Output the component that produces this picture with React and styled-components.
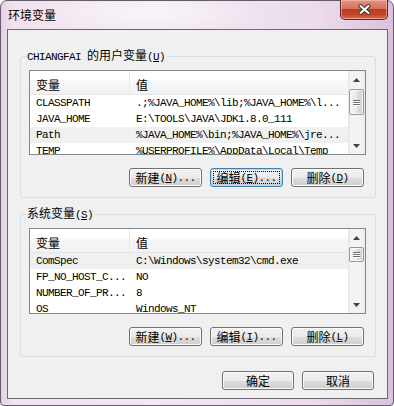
import React from "react";
import styled, { createGlobalStyle } from "styled-components";

const userVars = [
  ["CLASSPATH", ".;%JAVA_HOME%\\lib;%JAVA_HOME%\\l..."],
  ["JAVA_HOME", "E:\\TOOLS\\JAVA\\JDK1.8.0_111"],
  ["Path", "%JAVA_HOME%\\bin;%JAVA_HOME%\\jre..."],
  ["TEMP", "%USERPROFILE%\\AppData\\Local\\Temp"],
];

const systemVars = [
  ["ComSpec", "C:\\Windows\\system32\\cmd.exe"],
  ["FP_NO_HOST_C...", "NO"],
  ["NUMBER_OF_PR...", "8"],
  ["OS", "Windows_NT"],
];

const Arrow = ({ down }) => (
  <svg width="7" height="4" viewBox="0 0 7 4">
    <path d={down ? "M0 0 L7 0 L3.5 4 Z" : "M0 4 L7 4 L3.5 0 Z"} fill="#3f4247" />
  </svg>
);

const VarList = ({ rows, selected, height, thumb }) => (
  <List $height={height}>
    <Table>
      <Header>
        <HeaderCell $width={100} $sep>变量</HeaderCell>
        <HeaderCell>值</HeaderCell>
      </Header>
      {rows.map(([name, value], i) => (
        <Row key={name} $selected={i === selected}>
          <Cell $width={100}>{name}</Cell>
          <Cell>{value}</Cell>
        </Row>
      ))}
    </Table>
    <ScrollBar>
      <ArrowBox>
        <Arrow />
      </ArrowBox>
      <Track>
        <Thumb $height={thumb}>
          <Grip />
          <Grip />
          <Grip />
        </Thumb>
      </Track>
      <ArrowBox>
        <Arrow down />
      </ArrowBox>
    </ScrollBar>
  </List>
);

const App = () => {
  return (
    <Window>
      <GlobalStyle />
      <TitleBar>
        <Title>环境变量</Title>
        <CloseButton>
          <svg width="13" height="11" viewBox="0 0 13 11">
            <path d="M2.5 2 L10.5 9 M10.5 2 L2.5 9" stroke="#3b2a28" strokeWidth="4" strokeLinecap="round" />
            <path d="M2.5 2 L10.5 9 M10.5 2 L2.5 9" stroke="#fff" strokeWidth="2.2" strokeLinecap="round" />
          </svg>
        </CloseButton>
      </TitleBar>
      <Client>
        <Group>
          <Legend>
            <Latin>CHIANGFAI </Latin>的用户变量<Latin>(<u>U</u>)</Latin>
          </Legend>
          <VarList rows={userVars} selected={2} height={85} thumb={26} />
          <ButtonRow>
            <Button>
              新建<Latin>(<u>N</u>)...</Latin>
            </Button>
            <Button $focused>
              编辑<Latin>(<u>E</u>)...</Latin>
            </Button>
            <Button>
              删除<Latin>(<u>D</u>)</Latin>
            </Button>
          </ButtonRow>
        </Group>
        <Group $second>
          <Legend>
            系统变量<Latin>(<u>S</u>)</Latin>
          </Legend>
          <VarList rows={systemVars} selected={0} height={86} thumb={15} />
          <ButtonRow>
            <Button>
              新建<Latin>(<u>W</u>)...</Latin>
            </Button>
            <Button>
              编辑<Latin>(<u>I</u>)...</Latin>
            </Button>
            <Button>
              删除<Latin>(<u>L</u>)</Latin>
            </Button>
          </ButtonRow>
        </Group>
        <Footer>
          <Button $width={72}>确定</Button>
          <Button $width={72}>取消</Button>
        </Footer>
      </Client>
    </Window>
  );
};

const GlobalStyle = createGlobalStyle`
  html, body {
    margin: 0;
    padding: 0;
    background: #fff;
  }
  body {
    font-family: "Noto Sans CJK SC", sans-serif;
    font-size: 12px;
    color: #000;
  }
`;

const Window = styled.div`
  box-sizing: border-box;
  width: 394px;
  height: 406px;
  border: 1px solid #625c66;
  border-radius: 7px 7px 4px 4px;
  padding: 0 5px 6px 6px;
  display: flex;
  flex-direction: column;
  background:
    radial-gradient(ellipse 120px 20px at 150px 12px, rgba(255, 255, 255, 0.55), rgba(255, 255, 255, 0)),
    linear-gradient(90deg, #e6cfe6 0%, #f1e3ef 3%, #f3e8f2 40%, #ecdcec 80%, #dcc0dc 100%);
`;

const TitleBar = styled.div`
  height: 28px;
  display: flex;
  justify-content: space-between;
  align-items: flex-start;
`;

const Title = styled.div`
  margin: 6px 0 0 1px;
  line-height: 16px;
  font-size: 12px;
`;

const CloseButton = styled.div`
  box-sizing: border-box;
  width: 48px;
  height: 20px;
  margin-top: -1px;
  border: 1px solid #5e2a24;
  border-top: none;
  border-radius: 0 0 5px 5px;
  display: flex;
  align-items: center;
  justify-content: center;
  background: linear-gradient(180deg, #e2927f 0%, #d6735d 45%, #bd3a20 50%, #c8472b 80%, #da7258 100%);
  box-shadow: inset 0 0 0 1px rgba(255, 210, 200, 0.5);
`;

const Client = styled.div`
  flex: 1;
  border: 1px solid #6b6770;
  background: #f0f0f0;
  padding-top: 18px;
  display: flex;
  flex-direction: column;
`;

const Group = styled.fieldset`
  margin: ${(p) => (p.$second ? "8px" : "0")} 11px 0 12px;
  padding: 6px 9px 10px 8px;
  border: 1px solid #d5dfe5;
  border-radius: 3px;
  min-width: 0;
`;

const Legend = styled.legend`
  padding: 0 2px 0 1px;
  margin-left: -3px;
  line-height: 14px;
  font-size: 12px;
`;

const Latin = styled.span`
  font-family: "Liberation Mono", monospace;
  font-size: 11px;
  letter-spacing: -0.6px;
`;

const List = styled.div`
  box-sizing: border-box;
  height: ${(p) => p.$height}px;
  border: 1px solid #828790;
  background: #fff;
  display: flex;
  overflow: hidden;
`;

const Table = styled.div`
  flex: 1;
  min-width: 0;
  overflow: hidden;
`;

const Header = styled.div`
  box-sizing: border-box;
  height: 24px;
  display: flex;
  border-bottom: 1px solid #e5e5e5;
  background: linear-gradient(180deg, #ffffff 0%, #ffffff 38%, #f6f7f9 42%, #f1f2f4 100%);
`;

const HeaderCell = styled.div`
  box-sizing: border-box;
  width: ${(p) => (p.$width ? `${p.$width}px` : "auto")};
  flex: ${(p) => (p.$width ? "none" : "1")};
  padding: 3px 0 0 6px;
  display: flex;
  align-items: center;
  font-size: 12px;
  border-right: ${(p) => (p.$sep ? "1px solid #e3e8ee" : "none")};
`;

const Row = styled.div`
  height: 16px;
  display: flex;
  background: ${(p) => (p.$selected ? "#f0f0f0" : "transparent")};
`;

const Cell = styled.div`
  box-sizing: border-box;
  width: ${(p) => (p.$width ? `${p.$width}px` : "auto")};
  flex: ${(p) => (p.$width ? "none" : "1")};
  padding-left: 6px;
  font-family: "Liberation Mono", monospace;
  font-size: 11px;
  letter-spacing: -0.6px;
  line-height: 16px;
  white-space: nowrap;
  overflow: hidden;
`;

const ScrollBar = styled.div`
  width: 17px;
  display: flex;
  flex-direction: column;
  background: linear-gradient(90deg, #e4e4e4 0%, #f3f3f3 15%, #f3f3f3 85%, #e9e9e9 100%);
`;

const ArrowBox = styled.div`
  height: 17px;
  display: flex;
  align-items: center;
  justify-content: center;
`;

const Track = styled.div`
  flex: 1;
`;

const Thumb = styled.div`
  box-sizing: border-box;
  height: ${(p) => p.$height}px;
  margin: 1px 1px 0 1px;
  border: 1px solid #979797;
  border-radius: 2px;
  background: linear-gradient(90deg, #f3f3f3 0%, #ebebeb 50%, #dcdcdc 51%, #d4d4d4 100%);
  box-shadow: inset 0 0 0 1px rgba(255, 255, 255, 0.7);
  display: flex;
  flex-direction: column;
  align-items: center;
  justify-content: center;
  gap: 1px;
`;

const Grip = styled.div`
  width: 7px;
  height: 1px;
  background: #6d6d6d;
  box-shadow: 0 1px 0 #fff;
`;

const ButtonRow = styled.div`
  display: flex;
  justify-content: flex-end;
  gap: 8px;
  margin-top: 13px;
  padding-right: 2px;
`;

const Button = styled.div`
  box-sizing: border-box;
  width: ${(p) => p.$width || 73}px;
  height: 19px;
  border: 1px solid ${(p) => (p.$focused ? "#3c7fb1" : "#707070")};
  border-radius: 3px;
  display: flex;
  align-items: center;
  justify-content: center;
  font-size: 12px;
  line-height: 14px;
  background: linear-gradient(180deg, #f2f2f2 0%, #ebebeb 50%, #dddddd 51%, #cfcfcf 100%);
  box-shadow: inset 0 0 0 1px ${(p) => (p.$focused ? "#9fe0f8" : "#fcfcfc")};
  outline: ${(p) => (p.$focused ? "1px dotted #000" : "none")};
  outline-offset: -4px;
`;

const Footer = styled.div`
  display: flex;
  justify-content: flex-end;
  gap: 8px;
  margin-top: 14px;
  padding-right: 13px;
`;

export default App;
